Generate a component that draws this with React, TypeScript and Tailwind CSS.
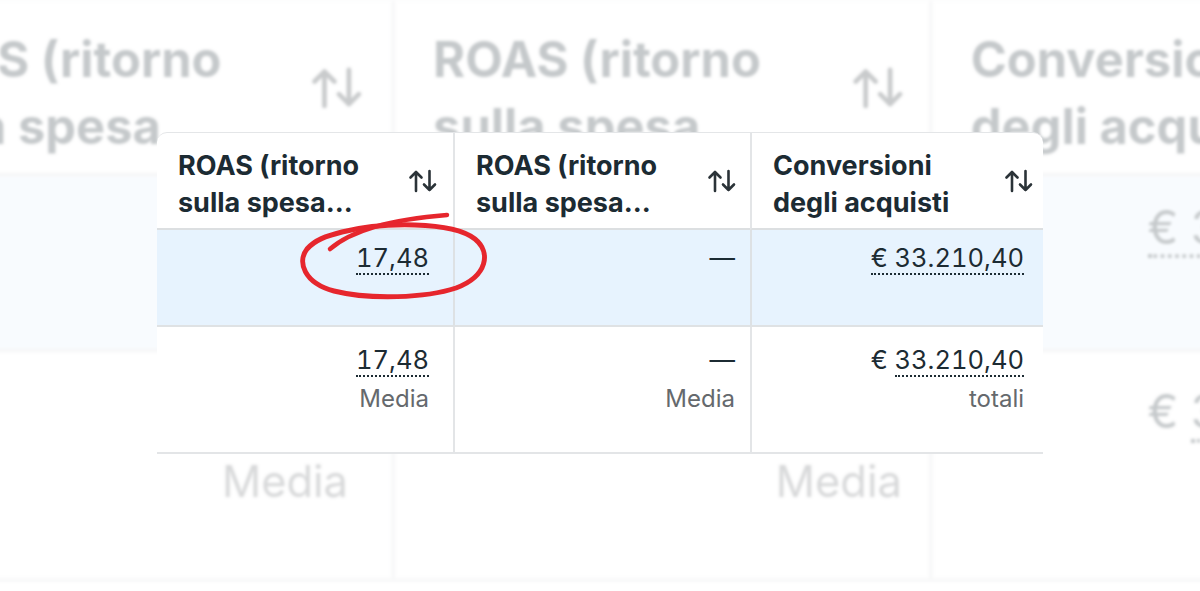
import React from "react";

type Col = {
  head: string[];
  headPad: string;
  cellPad: string;
  first?: boolean;
  row1: React.ReactNode;
  row2: React.ReactNode;
  label: string;
};

function SortIcon() {
  return (
    <svg
      width="29"
      height="24"
      viewBox="0 0 29 24"
      fill="none"
      stroke="currentColor"
      strokeWidth="2.6"
      strokeLinecap="round"
      strokeLinejoin="round"
      className="shrink-0 text-[#2b3338]"
    >
      <path d="M8 22V3M2.5 8.5L8 3l5.5 5.5" />
      <path d="M21.5 2v19M16 15.5l5.5 5.5 5.5-5.5" />
    </svg>
  );
}

function Dotted({ children }: { children: React.ReactNode }) {
  return <span className="border-b-2 border-dotted border-[#1c2b33]">{children}</span>;
}

const cols: Col[] = [
  {
    head: ["ROAS (ritorno", "sulla spesa..."],
    headPad: "pl-[21px] pr-[16px]",
    cellPad: "pr-[24px]",
    first: true,
    row1: <Dotted>17,48</Dotted>,
    row2: <Dotted>17,48</Dotted>,
    label: "Media",
  },
  {
    head: ["ROAS (ritorno", "sulla spesa..."],
    headPad: "pl-[21px] pr-[14px]",
    cellPad: "pr-[15px]",
    row1: "—",
    row2: "—",
    label: "Media",
  },
  {
    head: ["Conversioni", "degli acquisti"],
    headPad: "pl-[21px] pr-[10px]",
    cellPad: "pr-[19px]",
    row1: <Dotted>€ 33.210,40</Dotted>,
    row2: (
      <>
        € <Dotted>33.210,40</Dotted>
      </>
    ),
    label: "totali",
  },
];

function DataTable() {
  return (
    <div className="w-[886px] overflow-hidden rounded-t-[10px] border-t border-[#e4e6e8] bg-white text-[#1c2b33] [font-family:Inter,sans-serif]">
      <div className="grid grid-cols-[296px_297px_293px]">
        {cols.map((c, i) => (
          <div
            key={"h" + i}
            className={`flex h-[97px] items-center justify-between border-b-2 border-b-[#dcdfe1] ${c.headPad} ${
              c.first ? "" : "border-l-2 border-l-[#e3e5e7]"
            }`}
          >
            <div className="pt-[7px] text-[27px] font-bold leading-[37px]">
              {c.head.map((l) => (
                <div key={l} className="whitespace-nowrap">
                  {l}
                </div>
              ))}
            </div>
            <SortIcon />
          </div>
        ))}

        {cols.map((c, i) => (
          <div
            key={"a" + i}
            className={`h-[97px] border-b-2 border-b-[#dfe2e4] bg-[#e7f3fe] pt-[12px] text-right text-[25.5px] leading-[32px] tabular-nums ${c.cellPad} ${
              c.first ? "" : "border-l-2 border-l-[#dde1e4]"
            }`}
          >
            {c.row1}
          </div>
        ))}

        {cols.map((c, i) => (
          <div
            key={"b" + i}
            className={`h-[127px] border-b-2 border-b-[#e3e5e7] pt-[17px] text-right ${c.cellPad} ${
              c.first ? "" : "border-l-2 border-l-[#e3e5e7]"
            }`}
          >
            <div className="text-[25.5px] leading-[32px] tabular-nums">{c.row2}</div>
            <div className="mt-[7px] text-[24px] leading-[32px] text-[#65696d]">{c.label}</div>
          </div>
        ))}
      </div>
    </div>
  );
}

export default function App() {
  return (
    <div className="relative h-[591px] w-[1200px] overflow-hidden bg-white pl-[157px] pt-[132px]">
      <div className="grid">
        {/* faded zoomed copy behind */}
        <div className="[grid-area:1/1] origin-[372px_164px] scale-[1.81] opacity-25 blur-[1px]">
          <DataTable />
        </div>
        <div className="relative [grid-area:1/1]">
          <DataTable />
        </div>
      </div>

      {/* red hand-drawn circle */}
      <svg
        className="pointer-events-none absolute left-0 top-0"
        width="1200"
        height="591"
        viewBox="0 0 1200 591"
        fill="none"
        stroke="#e6262d"
        strokeLinecap="round"
        strokeLinejoin="round"
      >
        <path d="M330 249C352 230 395 219 447 215" strokeWidth="4.5" />
        <path
          d="M342 232C382 222 452 221 475 239C491 252 488 276 456 288C426 298 370 300 334 291C304 283 297 262 307 249C315 240 326 236 342 232"
          strokeWidth="5"
        />
      </svg>
    </div>
  );
}
